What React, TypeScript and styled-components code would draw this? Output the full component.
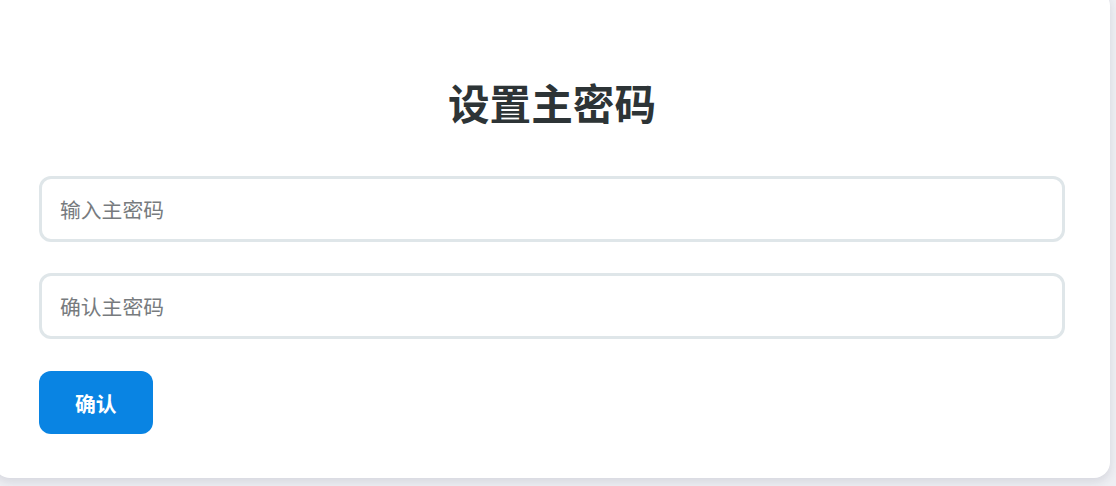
import styled, { createGlobalStyle } from "styled-components";

const GlobalStyle = createGlobalStyle`
  html, body {
    margin: 0;
    padding: 0;
    background: #eeeff3;
    font-family: "Noto Sans CJK SC", "Noto Sans", sans-serif;
    overflow: hidden;
  }
`;

const Page = styled.main`
  width: 1116px;
  height: 486px;
  overflow: hidden;
`;

const Card = styled.section`
  box-sizing: border-box;
  width: 1116px;
  margin: -10px 0 0 -6px;
  padding: 45px 45px 44px 45px;
  background: #ffffff;
  border-radius: 16px;
  box-shadow: 0 4px 10px rgba(40, 40, 70, 0.12);
  display: flex;
  flex-direction: column;
`;

const Title = styled.h1`
  margin: 37px 0 43px;
  text-align: center;
  font-size: 41.6px;
  font-weight: 700;
  line-height: 61px;
  color: #2d3436;
`;

const Field = styled.input`
  box-sizing: border-box;
  width: 100%;
  height: 66px;
  margin-bottom: 31px;
  padding: 0 18px;
  border: 3px solid #dfe6e9;
  border-radius: 12px;
  font-family: inherit;
  font-size: 20.8px;
  color: #2d3436;
  outline: none;
  &::placeholder {
    color: #777b7e;
  }
`;

const Confirm = styled.button`
  align-self: flex-start;
  height: 63px;
  margin-top: 1px;
  padding: 0 36px;
  border: none;
  border-radius: 12px;
  background: #0984e3;
  color: #ffffff;
  font-family: inherit;
  font-size: 20.8px;
  font-weight: 700;
  cursor: pointer;
`;

const App = () => {
  return (
    <Page>
      <GlobalStyle />
      <Card>
        <Title>设置主密码</Title>
        <Field type="password" placeholder="输入主密码" />
        <Field type="password" placeholder="确认主密码" />
        <Confirm type="button">确认</Confirm>
      </Card>
    </Page>
  );
};

export default App;
